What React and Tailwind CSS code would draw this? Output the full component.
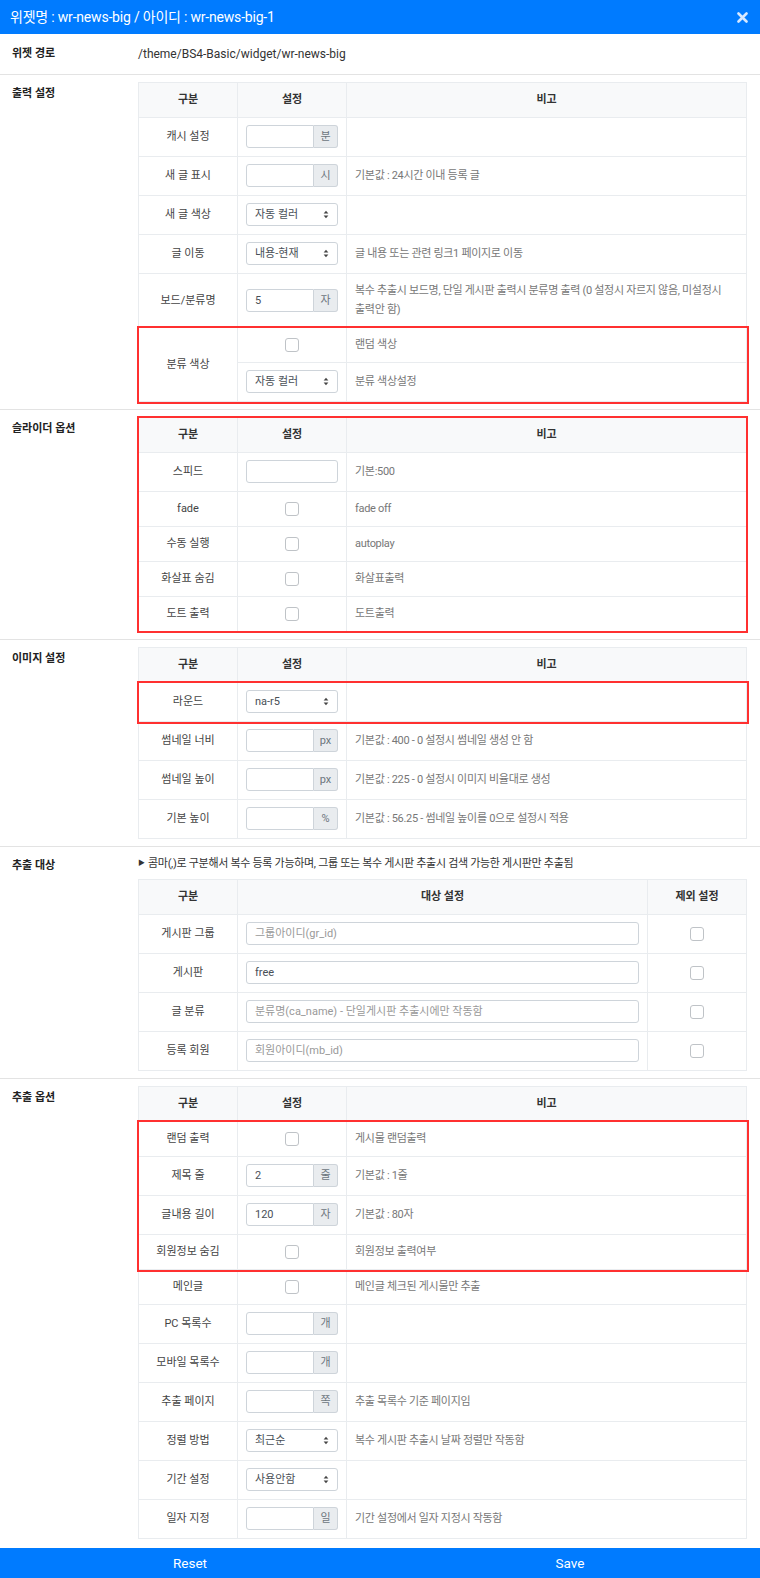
import React from "react";

const line = "border-[#e9ecef]";
const cell = `border-r border-b ${line} px-2 pt-[7px] pb-[8px] flex items-center leading-[19px]`;
const desc = `${cell} text-[#777] tracking-[-0.3px] break-keep`;
const red = "outline-2 outline-[#ff3030]";

const Arrows = () => (
  <svg width="6" height="9" viewBox="0 0 6 9" className="shrink-0">
    <path d="M3 0.8 L5.4 3.6 L0.6 3.6 Z" fill="#444" />
    <path d="M3 8.2 L5.4 5.4 L0.6 5.4 Z" fill="#444" />
  </svg>
);

const Check = () => (
  <span className="block w-[14px] h-[14px] rounded-[3px] border border-[#bfc3c7] bg-white" />
);

const Addon = ({ value = "", unit }) => (
  <div className="flex h-[23px] w-[93px]">
    <div className="flex-1 border border-[#ced4da] rounded-l-[3px] px-2 flex items-center text-[#495057]">
      {value}
    </div>
    <div className="w-[24px] border border-l-0 border-[#ced4da] rounded-r-[3px] bg-[#e9ecef] flex items-center justify-center text-[#6c757d] text-[11px]">
      {unit}
    </div>
  </div>
);

const Select = ({ value }) => (
  <div className="flex h-[23px] w-[93px] items-center justify-between border border-[#ced4da] rounded-[3px] pl-2 pr-[8px] text-[#495057]">
    <span>{value}</span>
    <Arrows />
  </div>
);

const Plain = () => <div className="h-[23px] w-[93px] border border-[#ced4da] rounded-[3px]" />;

// setting cell content by type
const Control = ({ c }) => {
  if (c.type === "addon") return <Addon value={c.value} unit={c.unit} />;
  if (c.type === "select") return <Select value={c.value} />;
  if (c.type === "check") return <div className="w-full flex justify-center"><Check /></div>;
  return <Plain />;
};

const Row = ({ r }) => (
  <div className="grid grid-cols-[99px_109px_1fr]">
    <div className={`${cell} justify-center text-[#444]`}>{r.label}</div>
    <div className={cell}>
      <Control c={r} />
    </div>
    <div className={desc}>{r.desc}</div>
  </div>
);

const Head = ({ cols = "grid-cols-[99px_109px_1fr]", items = ["구분", "설정", "비고"] }) => (
  <div className={`grid ${cols} bg-[#f8f9fa]`}>
    {items.map((t) => (
      <div key={t} className={`${cell} justify-center font-bold text-[#333]`}>
        {t}
      </div>
    ))}
  </div>
);

const Table = ({ children, className = "" }) => (
  <div className={`border-t border-l ${line} ${className}`}>{children}</div>
);

const Section = ({ title, children, last }) => (
  <div className={`flex py-[7px] ${last ? "pb-[9px]" : "border-b border-[#e3e3e3]"}`}>
    <div className="w-[138px] shrink-0 pl-3 pt-[3px] font-bold text-[#222] leading-[18px]">{title}</div>
    <div className="flex-1 pr-[13px]">{children}</div>
  </div>
);

const out1 = [
  { label: "캐시 설정", type: "addon", unit: "분", desc: "" },
  { label: "새 글 표시", type: "addon", unit: "시", desc: "기본값 : 24시간 이내 등록 글" },
  { label: "새 글 색상", type: "select", value: "자동 컬러", desc: "" },
  { label: "글 이동", type: "select", value: "내용-현재", desc: "글 내용 또는 관련 링크1 페이지로 이동" },
  {
    label: "보드/분류명",
    type: "addon",
    value: "5",
    unit: "자",
    desc: "복수 추출시 보드명, 단일 게시판 출력시 분류명 출력 (0 설정시 자르지 않음, 미설정시 출력안 함)",
  },
];

const slider = [
  { label: "스피드", type: "plain", desc: "기본:500" },
  { label: "fade", type: "check", desc: "fade off" },
  { label: "수동 실행", type: "check", desc: "autoplay" },
  { label: "화살표 숨김", type: "check", desc: "화살표출력" },
  { label: "도트 출력", type: "check", desc: "도트출력" },
];

const image = [
  { label: "썸네일 너비", type: "addon", unit: "px", desc: "기본값 : 400 - 0 설정시 썸네일 생성 안 함" },
  { label: "썸네일 높이", type: "addon", unit: "px", desc: "기본값 : 225 - 0 설정시 이미지 비율대로 생성" },
  { label: "기본 높이", type: "addon", unit: "%", desc: "기본값 : 56.25 - 썸네일 높이를 0으로 설정시 적용" },
];

const targets = [
  { label: "게시판 그룹", ph: "그룹아이디(gr_id)" },
  { label: "게시판", value: "free" },
  { label: "글 분류", ph: "분류명(ca_name) - 단일게시판 추출시에만 작동함" },
  { label: "등록 회원", ph: "회원아이디(mb_id)" },
];

const optRed = [
  { label: "랜덤 출력", type: "check", desc: "게시물 랜덤출력" },
  { label: "제목 줄", type: "addon", value: "2", unit: "줄", desc: "기본값 : 1줄" },
  { label: "글내용 길이", type: "addon", value: "120", unit: "자", desc: "기본값 : 80자" },
  { label: "회원정보 숨김", type: "check", desc: "회원정보 출력여부" },
];

const optRest = [
  { label: "메인글", type: "check", desc: "메인글 체크된 게시물만 추출" },
  { label: "PC 목록수", type: "addon", unit: "개", desc: "" },
  { label: "모바일 목록수", type: "addon", unit: "개", desc: "" },
  { label: "추출 페이지", type: "addon", unit: "쪽", desc: "추출 목록수 기준 페이지임" },
  { label: "정렬 방법", type: "select", value: "최근순", desc: "복수 게시판 추출시 날짜 정렬만 작동함" },
  { label: "기간 설정", type: "select", value: "사용안함", desc: "" },
  { label: "일자 지정", type: "addon", unit: "일", desc: "기간 설정에서 일자 지정시 작동함" },
];

export default function App() {
  return (
    <div className="w-[760px] bg-white text-[11px] font-['Roboto','Noto_Sans_CJK_KR',sans-serif]">
      <div className="h-[34px] bg-[#007bff] flex items-center justify-between pl-[10px] pr-[12px]">
        <span className="text-white text-[14px] tracking-[-0.2px]">위젯명 : wr-news-big / 아이디 : wr-news-big-1</span>
        <svg width="11" height="11" viewBox="0 0 11 11">
          <path d="M1.5 1.5 L9.5 9.5 M9.5 1.5 L1.5 9.5" stroke="#d6e8ff" strokeWidth="2.6" strokeLinecap="round" />
        </svg>
      </div>

      <div className="flex h-[41px] items-center border-b border-[#e3e3e3] text-[12px]">
        <div className="w-[138px] pl-3 font-bold text-[#222] text-[11px]">위젯 경로</div>
        <div className="text-[#333]">/theme/BS4-Basic/widget/wr-news-big</div>
      </div>

      <Section title="출력 설정">
        <Table>
          <Head />
          {out1.map((r) => (
            <Row key={r.label} r={r} />
          ))}
          <div className={`grid grid-cols-[99px_109px_1fr] ${red}`}>
            <div className={`${cell} row-span-2 justify-center text-[#444]`}>분류 색상</div>
            <div className={cell}>
              <div className="w-full flex justify-center"><Check /></div>
            </div>
            <div className={desc}>랜덤 색상</div>
            <div className={cell}>
              <Select value="자동 컬러" />
            </div>
            <div className={desc}>분류 색상설정</div>
          </div>
        </Table>
      </Section>

      <Section title="슬라이더 옵션">
        <Table className={`${red} -outline-offset-1`}>
          <Head />
          {slider.map((r) => (
            <Row key={r.label} r={r} />
          ))}
        </Table>
      </Section>

      <Section title="이미지 설정">
        <Table>
          <Head />
          <div className={red}>
            <Row r={{ label: "라운드", type: "select", value: "na-r5", desc: "" }} />
          </div>
          {image.map((r) => (
            <Row key={r.label} r={r} />
          ))}
        </Table>
      </Section>

      <Section title="추출 대상">
        <div className="leading-[19px] mb-[6px] text-[#333] flex items-center gap-[3px]">
          <span className="text-[7px] text-[#333]">▶</span>
          <span className="tracking-[-0.3px]">콤마(,)로 구분해서 복수 등록 가능하며, 그룹 또는 복수 게시판 추출시 검색 가능한 게시판만 추출됨</span>
        </div>
        <Table>
          <Head cols="grid-cols-[99px_410px_1fr]" items={["구분", "대상 설정", "제외 설정"]} />
          {targets.map((t) => (
            <div key={t.label} className="grid grid-cols-[99px_410px_1fr]">
              <div className={`${cell} justify-center text-[#444]`}>{t.label}</div>
              <div className={cell}>
                <div
                  className={`w-full h-[23px] border border-[#ced4da] rounded-[3px] px-2 flex items-center ${
                    t.value ? "text-[#495057]" : "text-[#999]"
                  }`}
                >
                  {t.value || t.ph}
                </div>
              </div>
              <div className={`${cell} justify-center`}>
                <Check />
              </div>
            </div>
          ))}
        </Table>
      </Section>

      <Section title="추출 옵션" last>
        <Table>
          <Head />
          <div className={red}>
            {optRed.map((r) => (
              <Row key={r.label} r={r} />
            ))}
          </div>
          {optRest.map((r) => (
            <Row key={r.label} r={r} />
          ))}
        </Table>
      </Section>

      <div className="grid grid-cols-2 h-[30px] bg-[#007bff] text-white text-[13.5px]">
        <div className="flex items-center justify-center">Reset</div>
        <div className="flex items-center justify-center">Save</div>
      </div>
    </div>
  );
}
